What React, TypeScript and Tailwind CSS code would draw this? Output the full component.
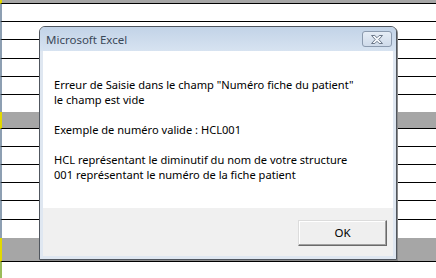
import React from 'react';

// heights include the 1px bottom line (border-box)
const rows = [
  { h: 'h-[4px]', fill: 'bg-[#a6a6a6]', edge: 'border-l-[#e2d900]', line: true },
  { h: 'h-[18px]', fill: 'bg-white', edge: 'border-l-[#8d9fb2]', line: true },
  { h: 'h-[18px]', fill: 'bg-white', edge: 'border-l-[#8d9fb2]', line: true },
  { h: 'h-[19px]', fill: 'bg-white', edge: 'border-l-[#8d9fb2]', line: true },
  { h: 'h-[18px]', fill: 'bg-white', edge: 'border-l-[#8d9fb2]', line: true },
  { h: 'h-[18px]', fill: 'bg-white', edge: 'border-l-[#8d9fb2]', line: true },
  { h: 'h-[17px]', fill: 'bg-white', edge: 'border-l-[#8d9fb2]', line: false },
  { h: 'h-[17px]', fill: 'bg-[#a6a6a6]', edge: 'border-l-[#e2d900]', line: true },
  { h: 'h-[18px]', fill: 'bg-white', edge: 'border-l-[#8d9fb2]', line: true },
  { h: 'h-[18px]', fill: 'bg-white', edge: 'border-l-[#8d9fb2]', line: true },
  { h: 'h-[18px]', fill: 'bg-white', edge: 'border-l-[#8d9fb2]', line: true },
  { h: 'h-[18px]', fill: 'bg-white', edge: 'border-l-[#8d9fb2]', line: true },
  { h: 'h-[19px]', fill: 'bg-white', edge: 'border-l-[#8d9fb2]', line: true },
  { h: 'h-[18px]', fill: 'bg-white', edge: 'border-l-[#8d9fb2]', line: false },
  { h: 'h-[24px]', fill: 'bg-[#a6a6a6]', edge: 'border-l-[#e2d900]', line: true },
  { h: 'h-[16px]', fill: 'bg-white', edge: 'border-l-[#9bbb59]', line: false },
];

const message = [
  'Erreur de Saisie dans le champ "Numéro fiche du patient"',
  'le champ est vide',
  '',
  'Exemple de numéro valide : HCL001',
  '',
  'HCL représentant le diminutif du nom de votre structure',
  '001 représentant le numéro de la fiche patient',
];

const uiFont = { fontFamily: '"Noto Sans", "Open Sans", sans-serif' };

function CloseGlyph() {
  return (
    <svg width="14" height="11" viewBox="0 0 14 11">
      <path
        d="M1.5 1.5 H4.8 L7 3.7 L9.2 1.5 H12.5 L8.8 5.5 L12.5 9.5 H9.2 L7 7.3 L4.8 9.5 H1.5 L5.2 5.5 Z"
        fill="#f3f6fa"
        stroke="#6b7889"
        strokeWidth="1"
        strokeLinejoin="round"
      />
    </svg>
  );
}

export default function App() {
  return (
    <div className="relative w-[436px] h-[278px] overflow-hidden bg-white">
      {/* Worksheet behind the message box */}
      <div className="flex flex-col w-full">
        {rows.map((row, i) => (
          <div
            key={i}
            className={`${row.h} ${row.fill} border-l-2 ${row.edge} ${row.line ? 'border-b border-b-black' : ''}`}
          />
        ))}
      </div>

      {/* Message box */}
      <div className="absolute left-[39px] top-[26px] w-[358px] h-[234px] flex flex-col rounded-t-[6px] border border-[#50565e] bg-[#dfe7f1] shadow-[1px_1px_0_#8a8a8a]">
        <div className="h-[24px] shrink-0 flex items-center justify-between pl-[6px] pr-[4px] rounded-t-[5px] bg-gradient-to-b from-[#c2d3e7] to-[#d7e3f1]">
          <span className="text-[11.5px] leading-none text-[#3a4858] pt-[1px]" style={uiFont}>
            Microsoft Excel
          </span>
          <div className="w-[30px] h-[16px] flex items-center justify-center rounded-[3px] border border-[#8b9aae] bg-gradient-to-b from-[#e6edf6] to-[#cfdbea]">
            <CloseGlyph />
          </div>
        </div>
        <div className="flex-1 flex flex-col mx-[3px] mb-[3px]">
          <div className="h-[157px] bg-white pl-[11px] pt-[26px] text-[11.1px] leading-[15px] text-black" style={uiFont}>
            {message.map((line, i) =>
              line ? (
                <div key={i} className="whitespace-nowrap">
                  {line}
                </div>
              ) : (
                <div key={i} className="h-[15px]" />
              )
            )}
          </div>
          <div className="flex-1 bg-[#f0f0f0] flex justify-end items-start pt-[12px] pr-[6px]">
            <button
              className="w-[89px] h-[26px] flex items-center justify-center bg-[#efefef] border border-t-[#dcdcdc] border-l-[#dcdcdc] border-r-[#6a6a6a] border-b-[#6a6a6a] shadow-[inset_-1px_-1px_0_#a0a0a0,inset_1px_1px_0_#ffffff] text-[11.5px] text-black"
              style={uiFont}
            >
              OK
            </button>
          </div>
        </div>
      </div>
    </div>
  );
}
